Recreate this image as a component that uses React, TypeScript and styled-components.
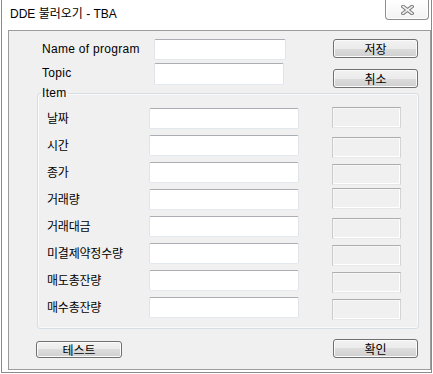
import React from "react";
import styled, { createGlobalStyle } from "styled-components";

const GlobalStyle = createGlobalStyle`
  html, body {
    margin: 0;
    padding: 0;
    background: #ffffff;
  }
  body {
    font-family: "Liberation Sans", "Noto Sans CJK KR", sans-serif;
    font-size: 12px;
    color: #000;
  }
  * {
    box-sizing: border-box;
  }
`;

const items = [
  { label: "날짜", shift: -1 },
  { label: "시간", shift: 2 },
  { label: "종가", shift: 2 },
  { label: "거래량", shift: -1 },
  { label: "거래대금", shift: 2 },
  { label: "미결제약정수량", shift: 2 },
  { label: "매도총잔량", shift: 2 },
  { label: "매수총잔량", shift: 2 },
];

const CloseGlyph = () => (
  <svg width="13" height="10" viewBox="0 0 13 10">
    <g strokeLinecap="square">
      <line x1="2" y1="1.5" x2="11" y2="8.5" stroke="#7a7a7a" strokeWidth="3.6" />
      <line x1="11" y1="1.5" x2="2" y2="8.5" stroke="#7a7a7a" strokeWidth="3.6" />
      <line x1="2" y1="1.5" x2="11" y2="8.5" stroke="#f2f2f2" strokeWidth="1.6" />
      <line x1="11" y1="1.5" x2="2" y2="8.5" stroke="#f2f2f2" strokeWidth="1.6" />
    </g>
  </svg>
);

export default function App() {
  return (
    <>
      <GlobalStyle />
      <Window>
        <TitleBar>
          <Title>DDE 불러오기 - TBA</Title>
          <CloseButton>
            <CloseGlyph />
          </CloseButton>
        </TitleBar>
        <Panel>
          <TopSection>
            <FormRows>
              <FieldRow $h={21}>
                <FieldLabel>Name of program</FieldLabel>
                <TextBox $w={132} $h={21} />
              </FieldRow>
              <FieldRow $h={22}>
                <FieldLabel>Topic</FieldLabel>
                <TextBox $w={130} $h={22} />
              </FieldRow>
            </FormRows>
            <ButtonColumn>
              <PushButton $w={85} $h={19}>저장</PushButton>
              <PushButton $w={85} $h={19}>취소</PushButton>
            </ButtonColumn>
          </TopSection>

          <ItemGroup>
            <GroupLegend>Item</GroupLegend>
            <ItemRows>
              {items.map((item) => (
                <ItemRow key={item.label}>
                  <ItemLabel>{item.label}</ItemLabel>
                  <TextBox $w={150} $h={21} />
                  <ValueBox $shift={item.shift} />
                </ItemRow>
              ))}
            </ItemRows>
          </ItemGroup>

          <BottomRow>
            <PushButton $w={86} $h={17}>테스트</PushButton>
            <PushButton $w={85} $h={19}>확인</PushButton>
          </BottomRow>
        </Panel>
      </Window>
    </>
  );
}

const Window = styled.div`
  margin-left: 1px;
  width: 431px;
  height: 373px;
  border: 1px solid #8a8a8a;
  border-top: none;
  background: #ffffff;
  padding: 0 0 2px 6px;
  display: flex;
  flex-direction: column;
`;

const TitleBar = styled.div`
  height: 30px;
  display: flex;
  justify-content: space-between;
  align-items: flex-start;
  padding: 0 2px 0 2px;
`;

const Title = styled.div`
  padding-top: 7px;
  font-size: 12px;
  line-height: 14px;
  color: #000;
`;

const CloseButton = styled.div`
  width: 44px;
  height: 20px;
  border: 1px solid #8d8d8d;
  border-top: none;
  border-radius: 0 0 4px 4px;
  background: linear-gradient(#ffffff, #f3f3f3);
  box-shadow: inset 0 0 0 1px #ffffff;
  display: flex;
  align-items: center;
  justify-content: center;
`;

const Panel = styled.div`
  width: 423px;
  height: 340px;
  border: 1px solid #9c9c9c;
  background: #f0f0f0;
  display: flex;
  flex-direction: column;
`;

const TopSection = styled.div`
  height: 56px;
  padding: 8px 12px 0 33px;
  display: flex;
  justify-content: space-between;
  align-items: flex-start;
`;

const FormRows = styled.div`
  display: flex;
  flex-direction: column;
  gap: 3px;
`;

const FieldRow = styled.div<{ $h: number }>`
  height: ${(p) => p.$h}px;
  display: flex;
  align-items: center;
`;

const FieldLabel = styled.div`
  width: 112px;
  font-size: 12px;
  letter-spacing: 0.3px;
  line-height: 14px;
  padding-bottom: 2px;
`;

const TextBox = styled.div<{ $w: number; $h: number }>`
  width: ${(p) => p.$w}px;
  height: ${(p) => p.$h}px;
  flex: none;
  background: #ffffff;
  border: 1px solid;
  border-color: #abadb3 #e2e3ea #e3e9ef #e2e3ea;
  border-radius: 2px;
`;

const ValueBox = styled.div<{ $shift: number }>`
  width: 69px;
  height: 21px;
  flex: none;
  margin-left: 33px;
  margin-top: ${(p) => p.$shift}px;
  background: #f0f0f0;
  border: 1px solid;
  border-color: #adadad #d4d4d4 #e8e8e8 #cacaca;
  box-shadow: inset 1px 1px 0 #f7f7f7, inset -1px -1px 0 #ffffff;
`;

const ButtonColumn = styled.div`
  display: flex;
  flex-direction: column;
  gap: 11px;
`;

const PushButton = styled.div<{ $w: number; $h: number }>`
  width: ${(p) => p.$w}px;
  height: ${(p) => p.$h}px;
  flex: none;
  border: 1px solid #707070;
  border-radius: 3px;
  background: linear-gradient(#f2f2f2 0%, #ebebeb 50%, #dddddd 50%, #cfcfcf 100%);
  box-shadow: inset 0 0 0 1px #fbfbfb;
  display: flex;
  align-items: center;
  justify-content: center;
  font-family: "Noto Sans CJK KR", "Liberation Sans", sans-serif;
  font-size: 12px;
  line-height: 12px;
  color: #000;
`;

const ItemGroup = styled.fieldset`
  margin: 0 11px 0 28px;
  padding: 9px 0 10px 0;
  border: 1px solid #d5dfe5;
  border-radius: 3px;
  box-shadow: inset 0 0 0 1px #fafafa;
  min-inline-size: 0;
`;

const GroupLegend = styled.legend`
  margin-left: 3px;
  padding: 0 1px;
  font-size: 12px;
  line-height: 12px;
  letter-spacing: 0.3px;
`;

const ItemRows = styled.div`
  display: flex;
  flex-direction: column;
  gap: 6px;
  padding-left: 9px;
`;

const ItemRow = styled.div`
  height: 21px;
  display: flex;
  align-items: flex-start;
`;

const ItemLabel = styled.div`
  width: 102px;
  flex: none;
  font-family: "Noto Sans CJK KR", sans-serif;
  font-size: 12px;
  line-height: 20px;
  letter-spacing: -0.2px;
`;

const BottomRow = styled.div`
  padding: 10px 12px 0 27px;
  display: flex;
  justify-content: space-between;
  align-items: flex-end;
`;
